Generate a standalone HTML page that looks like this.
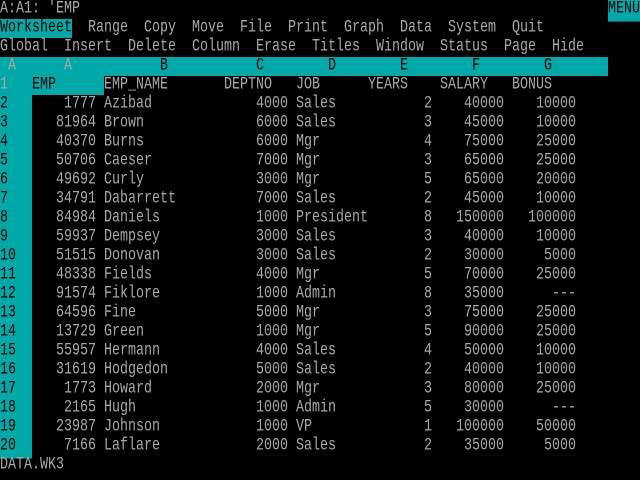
<!DOCTYPE html>
<html><head><meta charset="utf-8"><style>
body{margin:0;background:#000;width:640px;height:480px;overflow:hidden;position:relative;font-family:"Liberation Mono","DejaVu Sans Mono",monospace;font-size:13.33px;color:#a8a8a8}
.r{position:absolute;left:0;width:640px;height:19px;line-height:19px}
.r span{position:absolute;top:0;height:19px;white-space:pre;display:block}
.t{transform:scaleY(1.3);transform-origin:50% 55%}
.n{left:0;width:32px;background:#00a8a8;color:#000}
.a{left:32px;width:64px;text-align:right}
.b{left:104px}
.c{left:224px;width:64px;text-align:right}
.d{left:296px}
.e{left:368px;width:64px;text-align:right}
.f{left:440px;width:64px;text-align:right}
.g{left:512px;width:64px;text-align:right}
.hl{background:#00a8a8;color:#000}
</style></head><body>
<div class="r" style="top:0"><span class="t" style="left:0">A:A1: 'EMP</span><span class="hl t" style="left:608px;width:32px">MENU</span></div>
<div class="r" style="top:19px"><span class="hl" style="left:0;width:72px"></span><span class="t" style="left:0;color:#000">Worksheet</span><span class="t" style="left:88px">Range</span><span class="t" style="left:144px">Copy</span><span class="t" style="left:192px">Move</span><span class="t" style="left:240px">File</span><span class="t" style="left:288px">Print</span><span class="t" style="left:344px">Graph</span><span class="t" style="left:400px">Data</span><span class="t" style="left:448px">System</span><span class="t" style="left:512px">Quit</span></div>
<div class="r" style="top:38px"><span class="t" style="left:0">Global</span><span class="t" style="left:64px">Insert</span><span class="t" style="left:128px">Delete</span><span class="t" style="left:192px">Column</span><span class="t" style="left:256px">Erase</span><span class="t" style="left:312px">Titles</span><span class="t" style="left:376px">Window</span><span class="t" style="left:440px">Status</span><span class="t" style="left:504px">Page</span><span class="t" style="left:552px">Hide</span></div>
<div class="r" style="top:57px;background:#00a8a8;width:608px;color:#000"><span class="t" style="left:8px;color:#a8a8a8">A</span><span class="t" style="left:64px;color:#a8a8a8">A</span><span class="t" style="left:160px">B</span><span class="t" style="left:256px">C</span><span class="t" style="left:328px">D</span><span class="t" style="left:400px">E</span><span class="t" style="left:472px">F</span><span class="t" style="left:544px">G</span></div>
<div class="r" style="top:76px"><span style="left:0;width:104px;background:#00a8a8"></span><span class="t" style="left:0">1</span><span class="t" style="left:32px;color:#000">EMP</span><span class="t b">EMP_NAME</span><span class="t" style="left:224px">DEPTNO</span><span class="t d">JOB</span><span class="t" style="left:368px">YEARS</span><span class="t" style="left:440px">SALARY</span><span class="t" style="left:512px">BONUS</span></div>

<div class="r" style="top:95px"><span class="n t">2</span><span class="a t">1777</span><span class="b t">Azibad</span><span class="c t">4000</span><span class="d t">Sales</span><span class="e t">2</span><span class="f t">40000</span><span class="g t">10000</span></div>
<div class="r" style="top:114px"><span class="n t">3</span><span class="a t">81964</span><span class="b t">Brown</span><span class="c t">6000</span><span class="d t">Sales</span><span class="e t">3</span><span class="f t">45000</span><span class="g t">10000</span></div>
<div class="r" style="top:133px"><span class="n t">4</span><span class="a t">40370</span><span class="b t">Burns</span><span class="c t">6000</span><span class="d t">Mgr</span><span class="e t">4</span><span class="f t">75000</span><span class="g t">25000</span></div>
<div class="r" style="top:152px"><span class="n t">5</span><span class="a t">50706</span><span class="b t">Caeser</span><span class="c t">7000</span><span class="d t">Mgr</span><span class="e t">3</span><span class="f t">65000</span><span class="g t">25000</span></div>
<div class="r" style="top:171px"><span class="n t">6</span><span class="a t">49692</span><span class="b t">Curly</span><span class="c t">3000</span><span class="d t">Mgr</span><span class="e t">5</span><span class="f t">65000</span><span class="g t">20000</span></div>
<div class="r" style="top:190px"><span class="n t">7</span><span class="a t">34791</span><span class="b t">Dabarrett</span><span class="c t">7000</span><span class="d t">Sales</span><span class="e t">2</span><span class="f t">45000</span><span class="g t">10000</span></div>
<div class="r" style="top:209px"><span class="n t">8</span><span class="a t">84984</span><span class="b t">Daniels</span><span class="c t">1000</span><span class="d t">President</span><span class="e t">8</span><span class="f t">150000</span><span class="g t">100000</span></div>
<div class="r" style="top:228px"><span class="n t">9</span><span class="a t">59937</span><span class="b t">Dempsey</span><span class="c t">3000</span><span class="d t">Sales</span><span class="e t">3</span><span class="f t">40000</span><span class="g t">10000</span></div>
<div class="r" style="top:247px"><span class="n t">10</span><span class="a t">51515</span><span class="b t">Donovan</span><span class="c t">3000</span><span class="d t">Sales</span><span class="e t">2</span><span class="f t">30000</span><span class="g t">5000</span></div>
<div class="r" style="top:266px"><span class="n t">11</span><span class="a t">48338</span><span class="b t">Fields</span><span class="c t">4000</span><span class="d t">Mgr</span><span class="e t">5</span><span class="f t">70000</span><span class="g t">25000</span></div>
<div class="r" style="top:285px"><span class="n t">12</span><span class="a t">91574</span><span class="b t">Fiklore</span><span class="c t">1000</span><span class="d t">Admin</span><span class="e t">8</span><span class="f t">35000</span><span class="g t">---</span></div>
<div class="r" style="top:304px"><span class="n t">13</span><span class="a t">64596</span><span class="b t">Fine</span><span class="c t">5000</span><span class="d t">Mgr</span><span class="e t">3</span><span class="f t">75000</span><span class="g t">25000</span></div>
<div class="r" style="top:323px"><span class="n t">14</span><span class="a t">13729</span><span class="b t">Green</span><span class="c t">1000</span><span class="d t">Mgr</span><span class="e t">5</span><span class="f t">90000</span><span class="g t">25000</span></div>
<div class="r" style="top:342px"><span class="n t">15</span><span class="a t">55957</span><span class="b t">Hermann</span><span class="c t">4000</span><span class="d t">Sales</span><span class="e t">4</span><span class="f t">50000</span><span class="g t">10000</span></div>
<div class="r" style="top:361px"><span class="n t">16</span><span class="a t">31619</span><span class="b t">Hodgedon</span><span class="c t">5000</span><span class="d t">Sales</span><span class="e t">2</span><span class="f t">40000</span><span class="g t">10000</span></div>
<div class="r" style="top:380px"><span class="n t">17</span><span class="a t">1773</span><span class="b t">Howard</span><span class="c t">2000</span><span class="d t">Mgr</span><span class="e t">3</span><span class="f t">80000</span><span class="g t">25000</span></div>
<div class="r" style="top:399px"><span class="n t">18</span><span class="a t">2165</span><span class="b t">Hugh</span><span class="c t">1000</span><span class="d t">Admin</span><span class="e t">5</span><span class="f t">30000</span><span class="g t">---</span></div>
<div class="r" style="top:418px"><span class="n t">19</span><span class="a t">23987</span><span class="b t">Johnson</span><span class="c t">1000</span><span class="d t">VP</span><span class="e t">1</span><span class="f t">100000</span><span class="g t">50000</span></div>
<div class="r" style="top:437px"><span class="n t">20</span><span class="a t">7166</span><span class="b t">Laflare</span><span class="c t">2000</span><span class="d t">Sales</span><span class="e t">2</span><span class="f t">35000</span><span class="g t">5000</span></div>
<div class="r" style="top:456px"><span class="t" style="left:0">DATA.WK3</span></div>
</body></html>
